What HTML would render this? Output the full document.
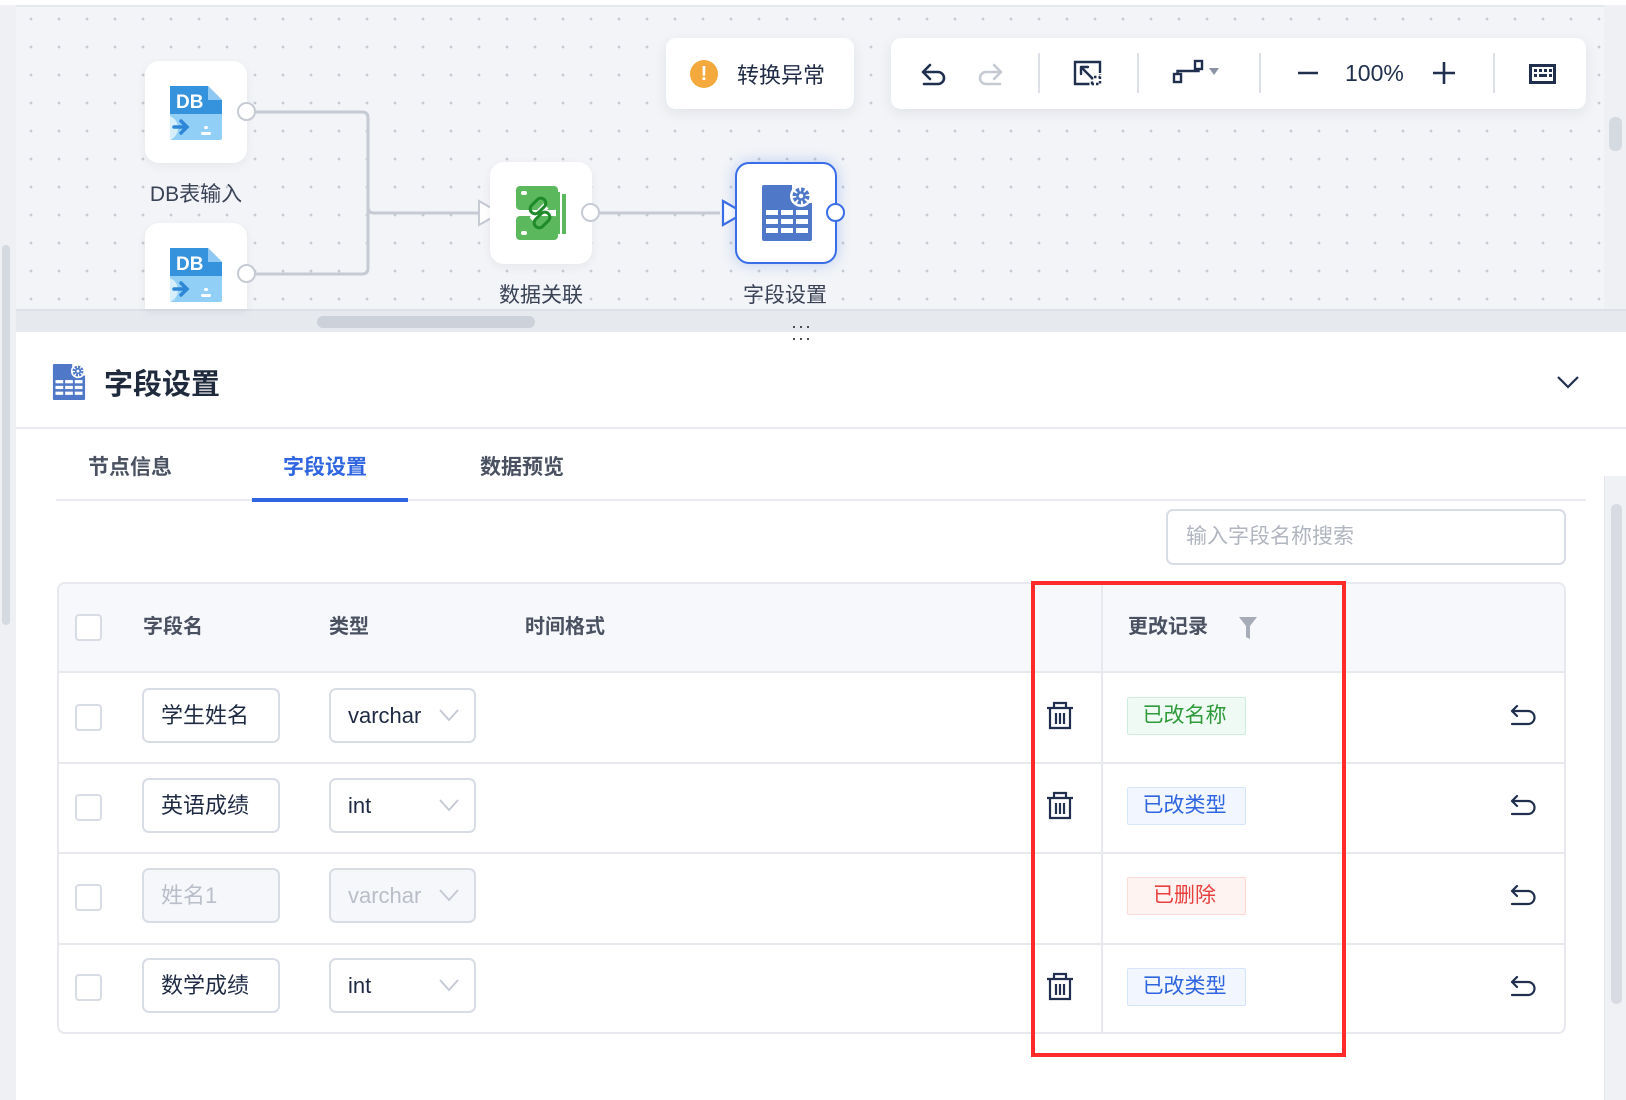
<!DOCTYPE html>
<html><head><meta charset="utf-8">
<style>
*{box-sizing:border-box;margin:0;padding:0}
body{width:1626px;height:1100px;overflow:hidden;background:#fff;font-family:"Liberation Sans","Noto Sans CJK SC",sans-serif;color:#1f2a44;position:relative}
.a{position:absolute}
.canvas{left:16px;top:5px;width:1588px;height:304px;background-color:#f2f4f7;background-image:radial-gradient(circle,#c6cad2 1.2px,transparent 1.6px);background-size:28px 28px;background-position:1px -2px;border-top:2px solid #e4e7ec}
.card{background:#fff;border-radius:10px;box-shadow:0 4px 14px rgba(30,40,70,.08)}
.node{background:#fff;border-radius:14px;box-shadow:0 3px 10px rgba(30,40,70,.06)}
.lbl{font-size:21px;color:#3a4356;text-align:center;width:160px}
.port{width:19px;height:19px;border-radius:50%;background:#fff;border:2px solid #c5cad3}
.sep{width:2px;height:40px;background:#dde0e6;top:53px}
.th{font-size:20px;color:#4a5262;font-weight:bold;top:610px}
.cb{width:27px;height:27px;border:2px solid #d8dce4;border-radius:4px;background:#fff}
.inp{height:55px;border:2px solid #d8dce4;border-radius:7px;background:#fff;font-size:22px;color:#1f2a44;padding-left:17px;line-height:51px}
.dis{background:#f6f7fa;color:#b9bec8}
.tag{width:119px;height:38px;border:1px solid;font-size:21px;line-height:36px;text-align:center;border-radius:2px;padding-right:4px}
.hl{height:2px;background:#e9ebef}
</style></head><body>
<div class="a" style="left:0;top:0;width:16px;height:1100px;background:#eef0f3"></div>
<div class="a" style="left:2px;top:245px;width:8px;height:380px;background:#d5d9e0;border-radius:4px"></div>
<div class="a" style="left:0;top:0;width:1626px;height:5px;background:#fff"></div>
<div class="a canvas"></div>
<div class="a" style="left:1604px;top:5px;width:22px;height:327px;background:#eef0f3"></div>
<div class="a" style="left:1609px;top:117px;width:13px;height:34px;background:#d5d9e0;border-radius:6px"></div>
<div class="a" style="left:16px;top:309px;width:1610px;height:23px;background:#e6e9ee;border-top:2px solid #dde0e6"></div>
<div class="a" style="left:317px;top:316px;width:218px;height:12px;background:#cdd2da;border-radius:6px"></div>

<svg class="a" style="left:0;top:0" width="1626" height="309">
<path d="M255 112 H362 Q368 112 368 118 V207 Q368 213 374 213 H478 M368 207 V268 Q368 274 362 274 H255" fill="none" stroke="#c5cad3" stroke-width="3"/>
<path d="M600 213 H720" fill="none" stroke="#c5cad3" stroke-width="3"/>
<path d="M479 201 L500 213 L479 225 Z" fill="#fff" stroke="#c5cad3" stroke-width="2"/>
<path d="M723 201 L744 213 L723 225 Z" fill="#fff" stroke="#3a6ee8" stroke-width="2.2"/>
</svg>

<div class="a node" style="left:145px;top:61px;width:102px;height:102px"></div>
<div class="a node" style="left:145px;top:223px;width:102px;height:86px;border-radius:14px 14px 0 0"></div>
<svg class="a" style="left:170px;top:86px" width="52" height="54" viewBox="0 0 52 54">
<path d="M0 0 H38 L52 14 V28 H0 Z" fill="#3592dd"/><path d="M38 0 L52 14 H38 Z" fill="#8ec8f3"/>
<path d="M0 28 H52 V52 Q52 54 50 54 H2 Q0 54 0 52 Z" fill="#92cff6"/>
<path d="M0 30 A13 13 0 0 1 0 54 Z" fill="#d7eefc"/>
<text x="6" y="22" font-family="Liberation Sans" font-weight="bold" font-size="19" fill="#fff">DB</text>
<path d="M4 41 H17 M11 35 L17 41 L11 47" stroke="#2d86d6" stroke-width="3.5" fill="none" stroke-linecap="round"/>
<rect x="34" y="40" width="4" height="3" rx="1.5" fill="#fff"/><rect x="31" y="46" width="10" height="3" rx="1.5" fill="#fff"/>
</svg>
<svg class="a" style="left:170px;top:248px" width="52" height="54" viewBox="0 0 52 54">
<path d="M0 0 H38 L52 14 V28 H0 Z" fill="#3592dd"/><path d="M38 0 L52 14 H38 Z" fill="#8ec8f3"/>
<path d="M0 28 H52 V52 Q52 54 50 54 H2 Q0 54 0 52 Z" fill="#92cff6"/>
<path d="M0 30 A13 13 0 0 1 0 54 Z" fill="#d7eefc"/>
<text x="6" y="22" font-family="Liberation Sans" font-weight="bold" font-size="19" fill="#fff">DB</text>
<path d="M4 41 H17 M11 35 L17 41 L11 47" stroke="#2d86d6" stroke-width="3.5" fill="none" stroke-linecap="round"/>
<rect x="34" y="40" width="4" height="3" rx="1.5" fill="#fff"/><rect x="31" y="46" width="10" height="3" rx="1.5" fill="#fff"/>
</svg>
<div class="a port" style="left:237px;top:102px"></div>
<div class="a port" style="left:237px;top:264px"></div>
<div class="a lbl" style="left:116px;top:178px">DB表输入</div>

<div class="a node" style="left:490px;top:162px;width:102px;height:102px"></div>
<svg class="a" style="left:516px;top:186px" width="52" height="54" viewBox="0 0 52 54">
<rect x="0" y="0" width="42" height="24" rx="4" fill="#5cb85c"/>
<rect x="0" y="30" width="42" height="24" rx="4" fill="#5cb85c"/>
<rect x="40" y="6" width="4" height="42" fill="#5cb85c"/><rect x="46" y="8" width="4" height="40" fill="#5cb85c"/>
<rect x="5" y="5" width="6" height="4" rx="2" fill="#fff"/><rect x="5" y="45" width="6" height="4" rx="2" fill="#fff"/>
<g fill="none" stroke="#fff" stroke-width="7"><path d="M16 34 L30 20"/></g>
<g fill="none" stroke="#1e8a2a" stroke-width="3"><rect x="17" y="11" width="10" height="18" rx="5" transform="rotate(45 22 20)"/><rect x="21" y="25" width="10" height="18" rx="5" transform="rotate(45 26 34)"/></g>
</svg>
<div class="a port" style="left:581px;top:203px"></div>
<div class="a lbl" style="left:461px;top:279px">数据关联</div>

<div class="a node" style="left:735px;top:162px;width:102px;height:102px;border:2px solid #3a6ee8;box-shadow:0 0 14px rgba(58,110,232,.3)"></div>
<svg class="a" style="left:762px;top:185px" width="50" height="56" viewBox="0 0 50 56">
<path d="M0 2 Q0 0 2 0 H30 V18 H50 V54 Q50 56 48 56 H2 Q0 56 0 54 Z" fill="#4f78c8"/>
<g fill="#fff"><rect x="4" y="25" width="12" height="5"/><rect x="19" y="25" width="12" height="5"/><rect x="34" y="25" width="12" height="5"/>
<rect x="4" y="34" width="12" height="5"/><rect x="19" y="34" width="12" height="5"/><rect x="34" y="34" width="12" height="5"/>
<rect x="4" y="43" width="12" height="5"/><rect x="19" y="43" width="12" height="5"/><rect x="34" y="43" width="12" height="5"/></g>
<circle cx="39" cy="11" r="11" fill="#fff"/>
<circle cx="39" cy="11" r="6" fill="none" stroke="#4f78c8" stroke-width="5" stroke-dasharray="3 1.7"/>
<circle cx="39" cy="11" r="3.5" fill="none" stroke="#4f78c8" stroke-width="2.5"/>
</svg>
<div class="a port" style="left:826px;top:203px;border-color:#3a6ee8"></div>
<div class="a lbl" style="left:705px;top:279px">字段设置</div>

<div class="a card" style="left:666px;top:38px;width:188px;height:71px"></div>
<div class="a" style="left:690px;top:60px;width:28px;height:28px;border-radius:50%;background:#f3a93b;color:#fff;font-weight:bold;font-size:20px;text-align:center;line-height:28px">!</div>
<div class="a" style="left:737px;top:58px;font-size:22px;color:#1f2a44">转换异常</div>

<div class="a card" style="left:891px;top:38px;width:695px;height:71px"></div>
<svg class="a" style="left:891px;top:38px" width="695" height="71">
<g fill="none" stroke="#1f2f4d" stroke-width="2.6" stroke-linecap="round" stroke-linejoin="round">
<path d="M39 27 L32 34 L39 41 M32 34 H47 A6 6 0 0 1 47 46 H33"/>
</g>
<g fill="none" stroke="#c6cad2" stroke-width="2.6" stroke-linecap="round" stroke-linejoin="round">
<path d="M103 27 L110 34 L103 41 M110 34 H95 A6 6 0 0 0 95 46 H109"/>
</g>
<g fill="none" stroke="#1f2f4d" stroke-width="2.4">
<path d="M196 46 H184 V24 H209 V35"/>
<path d="M190 29 L201 40 M190 29 H197 M190 29 V36" stroke-linecap="round"/>
<path d="M196 46 H209 V36" stroke-dasharray="2.5 2"/>
<path d="M201 46 V39 H209" stroke-dasharray="2.5 2"/>
</g>
<g fill="none" stroke="#1f2f4d" stroke-width="2.4">
<rect x="283" y="36" width="7" height="8"/><rect x="304" y="23" width="7" height="8"/>
<path d="M286.5 36 V33 H307.5 V31"/>
</g>
<path d="M318 30 H328 L323 37 Z" fill="#8a93a3"/>
<path d="M407 35 H427" stroke="#1f2f4d" stroke-width="2.6"/>
<text x="454" y="43" font-family="Liberation Sans" font-size="23" fill="#1f2f4d">100%</text>
<path d="M542 35 H564 M553 24 V46" stroke="#1f2f4d" stroke-width="2.6"/>
<g fill="#1f2f4d"><rect x="638" y="26" width="27" height="20"/></g>
<rect x="641" y="29" width="21" height="14" fill="#fff"/>
<g fill="#1f2f4d"><rect x="643" y="31" width="3" height="3"/><rect x="648" y="31" width="3" height="3"/><rect x="653" y="31" width="3" height="3"/><rect x="658" y="31" width="3" height="3"/><rect x="643" y="36" width="3" height="3"/><rect x="648" y="36" width="8" height="3"/><rect x="658" y="36" width="3" height="3"/></g>
</svg>
<div class="a sep" style="left:1038px"></div>
<div class="a sep" style="left:1137px"></div>
<div class="a sep" style="left:1259px"></div>
<div class="a sep" style="left:1493px"></div>

<div class="a" style="left:791px;top:320px;font-size:18px;color:#333;line-height:12px;letter-spacing:1px">···<br>···</div>

<svg class="a" style="left:51px;top:364px" width="36" height="36" viewBox="0 0 50 56">
<path d="M0 2 Q0 0 2 0 H30 V18 H50 V54 Q50 56 48 56 H2 Q0 56 0 54 Z" fill="#4f78c8"/>
<g fill="#fff"><rect x="4" y="25" width="12" height="5"/><rect x="19" y="25" width="12" height="5"/><rect x="34" y="25" width="12" height="5"/>
<rect x="4" y="34" width="12" height="5"/><rect x="19" y="34" width="12" height="5"/><rect x="34" y="34" width="12" height="5"/>
<rect x="4" y="43" width="12" height="5"/><rect x="19" y="43" width="12" height="5"/><rect x="34" y="43" width="12" height="5"/></g>
<circle cx="39" cy="11" r="11" fill="#fff"/>
<circle cx="39" cy="11" r="6" fill="none" stroke="#4f78c8" stroke-width="5" stroke-dasharray="3 1.7"/>
<circle cx="39" cy="11" r="3.5" fill="none" stroke="#4f78c8" stroke-width="2.5"/>
</svg>
<div class="a" style="left:104px;top:361px;font-size:29px;font-weight:bold;color:#1f2a3d">字段设置</div>
<svg class="a" style="left:1556px;top:374px" width="24" height="16"><path d="M2 3 L12 13 L22 3" fill="none" stroke="#1f2f4d" stroke-width="2.2"/></svg>
<div class="a hl" style="left:16px;top:427px;width:1610px"></div>

<div class="a" style="left:88px;top:451px;font-size:21px;font-weight:bold;color:#4a5262">节点信息</div>
<div class="a" style="left:283px;top:451px;font-size:21px;font-weight:bold;color:#2f65e0">字段设置</div>
<div class="a" style="left:480px;top:451px;font-size:21px;font-weight:bold;color:#4a5262">数据预览</div>
<div class="a hl" style="left:56px;top:499px;width:1530px"></div>
<div class="a" style="left:252px;top:498px;width:156px;height:4px;background:#2f65e0"></div>

<div class="a" style="left:1604px;top:476px;width:22px;height:624px;background:#f0f1f4;border-left:1px solid #e4e6ea"></div>
<div class="a" style="left:1611px;top:504px;width:11px;height:500px;background:#d8dbe2;border-radius:5px"></div>

<div class="a inp" style="left:1166px;top:509px;width:400px;height:56px;color:#b0b5bf;font-size:21px;padding-left:18px">输入字段名称搜索</div>

<div class="a" style="left:57px;top:582px;width:1509px;height:452px;border:2px solid #e7e9ee;border-radius:8px;overflow:hidden">
<div style="position:absolute;left:0;top:0;width:100%;height:89px;background:#f7f8fb;border-bottom:2px solid #e7e9ee"></div>
<div style="position:absolute;left:0;top:178px;width:100%;height:2px;background:#e7e9ee"></div>
<div style="position:absolute;left:0;top:268px;width:100%;height:2px;background:#e7e9ee"></div>
<div style="position:absolute;left:0;top:359px;width:100%;height:2px;background:#e7e9ee"></div>
<div style="position:absolute;left:1042px;top:0;width:2px;height:100%;background:#e7e9ee"></div>
</div>
<div class="a cb" style="left:75px;top:614px"></div>
<div class="a th" style="left:143px">字段名</div>
<div class="a th" style="left:329px">类型</div>
<div class="a th" style="left:525px">时间格式</div>
<div class="a th" style="left:1128px">更改记录</div>
<svg class="a" style="left:1238px;top:615px" width="20" height="26"><path d="M1 2 H19 L12 11 V24 L8 22 V11 Z" fill="#a6acb8"/></svg>

<div class="a cb" style="left:75px;top:704px"></div>
<div class="a inp" style="left:142px;top:688px;width:138px">学生姓名</div>
<div class="a inp" style="left:329px;top:688px;width:147px">varchar</div>

<div class="a cb" style="left:75px;top:794px"></div>
<div class="a inp" style="left:142px;top:778px;width:138px">英语成绩</div>
<div class="a inp" style="left:329px;top:778px;width:147px">int</div>

<div class="a cb" style="left:75px;top:884px"></div>
<div class="a inp dis" style="left:142px;top:868px;width:138px">姓名1</div>
<div class="a inp dis" style="left:329px;top:868px;width:147px">varchar</div>

<div class="a cb" style="left:75px;top:974px"></div>
<div class="a inp" style="left:142px;top:958px;width:138px">数学成绩</div>
<div class="a inp" style="left:329px;top:958px;width:147px">int</div>

<svg class="a" style="left:0;top:0" width="1626" height="1100">
<g fill="none" stroke="#c3c8d2" stroke-width="1.8">
<path d="M440 710 L449 720 L458 710"/><path d="M440 800 L449 810 L458 800"/><path d="M440 890 L449 900 L458 890"/><path d="M440 980 L449 990 L458 980"/>
</g>
<g fill="none" stroke="#1f2f4d" stroke-width="2.2">
<g id="tr"><path d="M1047 708 H1073 M1054 708 V703 H1066 V708 M1050 708 V728 H1070 V708 M1056 713 V724 M1060 713 V724 M1064 713 V724"/></g>
<use href="#tr" y="90"/><use href="#tr" y="271"/>
<g id="un"><path d="M1517 706 L1512 711 L1517 716 M1512 711 H1528 A6.5 6.5 0 0 1 1528 724 H1512" stroke-linecap="round" stroke-linejoin="round"/></g>
<use href="#un" y="90"/><use href="#un" y="180"/><use href="#un" y="271"/>
</g>
</svg>

<div class="a tag" style="left:1127px;top:697px;color:#2e9a3a;background:#f0faf4;border-color:#cdeedd">已改名称</div>
<div class="a tag" style="left:1127px;top:787px;color:#2f65e0;background:#f1f6ff;border-color:#d6e4ff">已改类型</div>
<div class="a tag" style="left:1127px;top:877px;color:#e8413d;background:#fff3f2;border-color:#ffd9d6">已删除</div>
<div class="a tag" style="left:1127px;top:968px;color:#2f65e0;background:#f1f6ff;border-color:#d6e4ff">已改类型</div>

<div class="a" style="left:1031px;top:581px;width:315px;height:476px;border:4px solid #ff2a2a"></div>
</body></html>
